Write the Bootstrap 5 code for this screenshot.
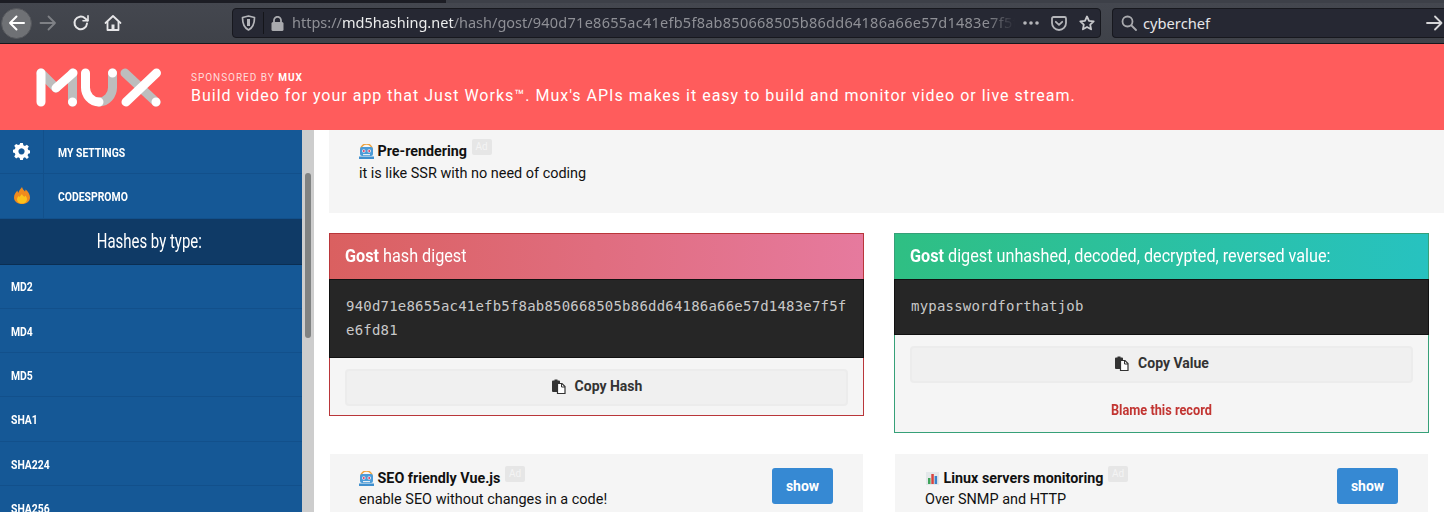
<!DOCTYPE html>
<html lang="en">
<head>
  <meta charset="UTF-8">
  <meta name="viewport" content="width=device-width, initial-scale=1">
  <title>Gost hash digest</title>
  <link href="https://cdn.jsdelivr.net/npm/bootstrap@5.3.0/dist/css/bootstrap.min.css" rel="stylesheet">
  <style>
    html, body { height: 100%; overflow: hidden; }
    body { font-family: Roboto, sans-serif; font-size: 14.45px; color: #111; background: #fff; }
    .squeeze { display: inline-block; transform: scaleX(.9); transform-origin: left center; white-space: nowrap; }

    .tabstrip { height: 3px; background: #3d4048; }
    .tabstrip div { width: 446px; height: 3px; background: #1c1d24; }
    .toolbar { height: 41px; background: linear-gradient(#44474f, #3f4249); border-bottom: 1px solid #16171c; }
    .nav-ico { flex: none; display: flex; align-items: center; justify-content: center; }
    .back-btn { width: 31px; height: 31px; margin-left: 1px; border-radius: 50%; background: #6f7175; border: 1px solid #55575c; }
    .urlbar { width: 869px; height: 30px; background: #262833; border: 1px solid #17181e; border-radius: 4px; color: #8f9096; font-family: "Noto Sans", sans-serif; font-size: 14.5px; }
    .searchbar { flex: 1; height: 30px; margin-left: 11px; background: #262833; border: 1px solid #17181e; border-right: 0; border-radius: 4px 0 0 4px; color: #e6e6e8; font-family: "Noto Sans", sans-serif; font-size: 14.7px; }
    .urltext { width: 723px; margin-left: 8px; overflow: hidden; white-space: nowrap; -webkit-mask-image: linear-gradient(to right, #000 96%, transparent); mask-image: linear-gradient(to right, #000 96%, transparent); }
    .urltext b { font-weight: 400; color: #eceded; }
    .urltext i { font-style: normal; letter-spacing: .26px; }
    .urlsep { width: 1px; height: 22px; background: #14151a; margin: 0 7px 0 7px; }

    .promo { height: 86px; background: #ff5c5c; color: #fff; padding-left: 35px; }
    .promo-by { font-size: 10px; letter-spacing: .98px; line-height: 12px; color: #ffdcdc; padding-top: 4px; }
    .promo-by b { color: #fff; }
    .promo-line { font-size: 16px; letter-spacing: 1px; line-height: 21px; margin-top: 1px; padding-bottom: 1px; }

    .sidebar { width: 302px; flex: none; background: #155896; color: #fff; font-weight: 700; font-size: 13px; }
    .side-item { height: 44.3px; border-bottom: 1px solid #12508b; }
    .side-item .squeeze { transform: scaleX(.8); padding-top: 2px; }
    .side-ico { width: 44px; align-self: stretch; border-right: 1px solid #12508b; }
    .side-label { padding-left: 14px; }
    .side-plain { padding-left: 11px; }
    .side-head { height: 46px; background: #0f3a66; border-bottom: 1px solid #0b2e52; font-size: 20px; font-weight: 400; padding-right: 4px; }
    .side-head .squeeze { transform-origin: center; transform: scaleX(.747); }
    .scrolltrack { width: 12px; flex: none; background: #cdcdcd; padding: 43px 3px 0; }
    .scrollthumb { height: 165px; background: #808282; border-radius: 3px; }

    .content { flex: 1; min-width: 0; }
    .notice { margin-left: 15px; height: 83px; background: #f5f5f5; padding: 11px 30px; }
    .ad-title { font-weight: 700; font-size: 14.3px; line-height: 20px; height: 20px; margin-top: -2px; }
    .ad-line { line-height: 20px; margin-top: 5px; }
    .ad-tag { display: inline-block; background: #e6e6e6; color: #f4f4f4; font-size: 10px; font-weight: 400; line-height: 16px; padding: 0 4px; border-radius: 2px; vertical-align: 6px; margin-left: 1px; }
    .ad-emoji { vertical-align: -3px; }

    .hash-row { --bs-gutter-x: 30px; margin: 20px 0 0; }
    .digest { border-radius: 0; background: #f5f5f5; }
    .digest-red { border: 1px solid #b9363a; height: 183px; }
    .digest-green { border: 1px solid #36a078; height: 200px; }
    .digest-head { height: 45px; color: #fff; font-size: 19px; padding: 0 0 1px 15px; border-radius: 0; }
    .digest-head .squeeze { transform: scaleX(.853); }
    .digest-head b { font-weight: 700; }
    .digest-red .digest-head { background: linear-gradient(to right, #da6060, #e67a9e); }
    .digest-green .digest-head { background: linear-gradient(to right, #2fbf83, #27c2c0); }
    .digest-code { background: #262626; border: 1px solid #111; color: #c9c9c9; font-family: "DejaVu Sans Mono", monospace; font-size: 14px; letter-spacing: .2px; line-height: 24px; padding: 14px 15px 15px 16px; word-break: break-all; margin: 0 -1px; }
    .digest-red .digest-code { height: 79px; }
    .digest-green .digest-code { height: 56px; }
    .copy-btn { display: flex; align-items: center; justify-content: center; gap: 9px; height: 37px; margin: 11px 15px 0; width: auto; background: #f0f0f0; border: 2px solid #ececec; border-radius: 4px; font-size: 14px; font-weight: 700; color: #333; padding: 0 0 3px; }
    .blame { color: #c23532; font-weight: 700; font-size: 14px; margin-top: 17px; }
    .blame .squeeze { transform-origin: center; transform: scaleX(.91); }

    .ad-box { margin: 21px 1px 0; height: 80px; background: #f5f5f5; padding: 14px 30px 0 30px; }
    .ad-box-left { margin-top: 38px; padding-left: 29px; }
    .ad-box .ad-line { margin-top: 4px; }
    .show-btn { width: 61px; height: 36px; padding: 0; background: #3689d3; border: 0; border-radius: 3px; color: #fff; font-size: 14px; font-weight: 700; }
  </style>
</head>
<body>
  <div class="tabstrip"><div></div></div>
  <div class="toolbar d-flex align-items-center">
    <div class="nav-ico back-btn">
      <svg width="18" height="16" viewBox="0 0 18 16" fill="none" stroke="#fff" stroke-width="2" stroke-linecap="round" stroke-linejoin="round"><path d="M16 8H2M8.500 1.500 2 8l6.500 6.500"/></svg>
    </div>
    <div class="nav-ico" style="margin-left:7px">
      <svg width="18" height="16" viewBox="0 0 18 16" fill="none" stroke="#7f8186" stroke-width="1.800" stroke-linecap="round" stroke-linejoin="round"><path d="M1.500 8H16M9.500 1.500 16 8l-6.500 6.500"/></svg>
    </div>
    <div class="nav-ico" style="margin-left:15px">
      <svg width="18" height="18" viewBox="0 0 18 18" fill="none" stroke="#e6e6e8" stroke-width="2" stroke-linecap="round" stroke-linejoin="round"><path d="M15 9.500A6.300 6.300 0 1 1 13 4.300L15.500 6.500"/><path d="M16 1.800v5h-5" stroke-width="1.600"/></svg>
    </div>
    <div class="nav-ico" style="margin-left:14px">
      <svg width="18" height="18" viewBox="0 0 18 18" fill="none" stroke="#e6e6e8" stroke-width="1.800" stroke-linejoin="round" stroke-linecap="round"><path d="M1.500 9 9 2l7.500 7"/><path d="M3.500 8v8h11V8"/><rect x="7.500" y="10.500" width="3" height="5" fill="#e6e6e8" stroke="none"/></svg>
    </div>
    <div class="urlbar d-flex align-items-center" style="margin-left:110px">
      <div class="nav-ico ms-2">
        <svg width="15" height="16" viewBox="0 0 15 16" fill="none" stroke="#b5b6ba" stroke-width="1.700" stroke-linejoin="round"><path d="M1.500 2.500 7.500 1l6 1.500c0 6-1 10-6 12.500-5-2.500-6-6.500-6-12.500Z"/><path d="M7.500 4v7" stroke-width="3"/></svg>
      </div>
      <div class="urlsep"></div>
      <div class="nav-ico">
        <svg width="13" height="15" viewBox="0 0 13 15"><path d="M3 6.500V4.300a3.500 3.500 0 0 1 7 0v2.200" fill="none" stroke="#a9aaae" stroke-width="1.800"/><rect x="0.500" y="6" width="12" height="9" rx="1.500" fill="#a9aaae"/></svg>
      </div>
      <div class="urltext">https://<b>md5hashing.net</b>/hash/gost/<i>940d71e8655ac41efb5f8ab850668505b86dd64186a66e57d1483e7f5fe6fd81</i></div>
      <div class="nav-ico" style="margin-left:8px">
        <svg width="16" height="4" viewBox="0 0 16 4" fill="#b5b6ba"><circle cx="2" cy="2" r="1.800"/><circle cx="8" cy="2" r="1.800"/><circle cx="14" cy="2" r="1.800"/></svg>
      </div>
      <div class="nav-ico" style="margin-left:12px">
        <svg width="16" height="15" viewBox="0 0 16 15" fill="none" stroke="#b5b6ba" stroke-width="1.800" stroke-linejoin="round" stroke-linecap="round"><path d="M2.500 1h11A1.500 1.500 0 0 1 15 2.500V7A7 7 0 0 1 1 7V2.500A1.500 1.500 0 0 1 2.500 1Z"/><path d="m4.800 5.800 3.200 3 3.200-3"/></svg>
      </div>
      <div class="nav-ico" style="margin-left:12px">
        <svg width="16" height="16" viewBox="0 0 16 16" fill="none" stroke="#c8c9cc" stroke-width="1.800" stroke-linejoin="round"><path d="m8 1.500 2 4.300 4.700.6-3.500 3.200.9 4.700L8 12l-4.100 2.300.9-4.700L1.300 6.400 6 5.800Z"/></svg>
      </div>
    </div>
    <div class="searchbar d-flex align-items-center">
      <div class="nav-ico" style="margin-left:8px">
        <svg width="16" height="16" viewBox="0 0 16 16" fill="none" stroke="#a9aaae" stroke-width="1.800" stroke-linecap="round"><circle cx="6.500" cy="6.500" r="5"/><path d="m10.500 10.500 4.500 4.500"/></svg>
      </div>
      <span style="margin-left:6px">cyberchef</span>
      <div class="nav-ico ms-auto" style="margin-right:1px">
        <svg width="17" height="16" viewBox="0 0 17 16" fill="none" stroke="#d6d6d8" stroke-width="1.800" stroke-linecap="round" stroke-linejoin="round"><path d="M1 8h14.500M9 1.500 15.500 8 9 14.500"/></svg>
      </div>
    </div>
  </div>

  <div class="promo d-flex align-items-center">
    <svg width="127" height="41" viewBox="35 67 127 41" fill="none" stroke-width="9" stroke-linecap="round" stroke-linejoin="round">
      <path d="M41 73 56 88M72.500 73v29M125 73l31 29M112.500 73v14a13.500 14.500 0 0 1-13.500 15" stroke="#bdbdbd"/>
      <path d="M41 73v29M56 88 73 73M85.500 73v14a13.500 14.500 0 0 0 13.500 15M156.500 73 126 102" stroke="#fff"/>
      <path d="M72.500 102v.01M112.500 73v.01M156 102v.01" stroke="#fff"/>
    </svg>
    <div style="margin-left:29px">
      <div class="promo-by">SPONSORED BY <b>MUX</b></div>
      <div class="promo-line">Build video for your app that Just Works™. Mux's APIs makes it easy to build and monitor video or live stream.</div>
    </div>
  </div>

  <div class="d-flex">
    <div class="sidebar">
      <div class="side-item d-flex align-items-center">
        <div class="side-ico d-flex align-items-center justify-content-center">
          <svg width="17" height="17" viewBox="0 0 24 24"><path fill="#fff" fill-rule="evenodd" d="M10 0h4l.7 3.300 2.300 1 2.900-1.800 2.800 2.800L21 8l1 2.300 3 .7v4l-3.100.7-1 2.300 1.800 2.900-2.800 2.800L17 21l-2.300 1-.7 3h-4l-.7-3.100-2.300-1-2.900 1.800-2.800-2.800L3 17l-1-2.300L-1 14v-4l3.100-.7 1-2.300L1.300 4.100l2.800-2.800L7 3.100l2.300-1ZM12 7.800a4.500 4.500 0 1 0 .01 0Z" transform="translate(.5 0) scale(.96)"/></svg>
        </div>
        <div class="side-label"><span class="squeeze">MY SETTINGS</span></div>
      </div>
      <div class="side-item d-flex align-items-center">
        <div class="side-ico d-flex align-items-center justify-content-center">
          <svg width="16" height="17" viewBox="0 0 16 17"><path fill="#f08a1d" d="M8 0c.6 2.500 2 3 3 4.600.4-.6.500-1.200.5-2C14 4.500 16 7.500 16 10.500 16 14.500 12.500 17 8 17s-8-2.500-8-6.500C0 7.500 2 5 3.500 3.500c0 1 .2 1.700.8 2.300C5 3.500 6.500 2 8 0Z"/><path fill="#fcc21b" d="M8 7c.5 1.500 1.500 2 2.500 2.800.5-.3.600-.7.700-1.200 1.200 1 1.800 2.300 1.800 3.600C13 15 10.800 16.500 8 16.500S3 15 3 12.200c0-1.500 1-2.800 2-3.500.1.500.2.900.6 1.200C6.200 9 7 8 8 7Z"/></svg>
        </div>
        <div class="side-label"><span class="squeeze">CODESPROMO</span></div>
      </div>
      <div class="side-head d-flex align-items-center justify-content-center"><span class="squeeze">Hashes by type:</span></div>
      <div class="side-item side-plain d-flex align-items-center"><span class="squeeze">MD2</span></div>
      <div class="side-item side-plain d-flex align-items-center"><span class="squeeze">MD4</span></div>
      <div class="side-item side-plain d-flex align-items-center"><span class="squeeze">MD5</span></div>
      <div class="side-item side-plain d-flex align-items-center"><span class="squeeze">SHA1</span></div>
      <div class="side-item side-plain d-flex align-items-center"><span class="squeeze">SHA224</span></div>
      <div class="side-item side-plain d-flex align-items-center"><span class="squeeze">SHA256</span></div>
    </div>
    <div class="scrolltrack"><div class="scrollthumb"></div></div>

    <div class="content">
      <div class="notice">
        <div class="ad-title">
          <svg class="ad-emoji" width="15" height="15" viewBox="0 0 15 15"><path d="M2 5a5.500 5 0 0 1 11 0" fill="none" stroke="#f0a23c" stroke-width="1.500"/><rect x="1" y="3" width="13" height="9" rx="2" fill="#4a9bd8"/><circle cx="4.800" cy="7" r="1.800" fill="#f4e3e8"/><circle cx="10.200" cy="7" r="1.800" fill="#f4e3e8"/><circle cx="4.800" cy="7" r=".9" fill="#d8345f"/><circle cx="10.200" cy="7" r=".9" fill="#d8345f"/><rect x="4" y="10" width="7" height="1.200" fill="#e6eef5"/><rect x="0" y="12.500" width="15" height="2.500" fill="#3f8fce"/></svg>
          Pre-rendering <span class="ad-tag">Ad</span>
        </div>
        <div class="ad-line">it is like SSR with no need of coding</div>
      </div>

      <div class="row hash-row">
        <div class="col-6">
          <div class="card digest digest-red">
            <div class="digest-head d-flex align-items-center"><span class="squeeze"><b>Gost</b> hash digest</span></div>
            <div class="digest-code">940d71e8655ac41efb5f8ab850668505b86dd64186a66e57d1483e7f5fe6fd81</div>
            <button class="btn copy-btn" type="button">
              <svg width="15" height="15" viewBox="0 0 15 15"><path fill="#333" d="M1 2.500A1 1 0 0 1 2 1.500h1.500V.500h3v1H8a1 1 0 0 1 1 1V4H6v9H2a1 1 0 0 1-1-1Z"/><path d="M6.500 4.500h4.500l3 3v7h-7.500Z" fill="#fff" stroke="#333" stroke-width="1.200"/><path d="M10.500 4.500v3.500H14" fill="none" stroke="#333"/></svg>
              <span>Copy Hash</span>
            </button>
          </div>
          <div class="ad-box ad-box-left d-flex justify-content-between">
            <div>
              <div class="ad-title">
                <svg class="ad-emoji" width="15" height="15" viewBox="0 0 15 15"><path d="M2 5a5.500 5 0 0 1 11 0" fill="none" stroke="#f0a23c" stroke-width="1.500"/><rect x="1" y="3" width="13" height="9" rx="2" fill="#4a9bd8"/><circle cx="4.800" cy="7" r="1.800" fill="#f4e3e8"/><circle cx="10.200" cy="7" r="1.800" fill="#f4e3e8"/><circle cx="4.800" cy="7" r=".9" fill="#d8345f"/><circle cx="10.200" cy="7" r=".9" fill="#d8345f"/><rect x="4" y="10" width="7" height="1.200" fill="#e6eef5"/><rect x="0" y="12.500" width="15" height="2.500" fill="#3f8fce"/></svg>
                SEO friendly Vue.js <span class="ad-tag">Ad</span>
              </div>
              <div class="ad-line">enable SEO without changes in a code!</div>
            </div>
            <button class="btn show-btn" type="button">show</button>
          </div>
        </div>

        <div class="col-6">
          <div class="card digest digest-green">
            <div class="digest-head d-flex align-items-center"><span class="squeeze"><b>Gost</b> digest unhashed, decoded, decrypted, reversed value:</span></div>
            <div class="digest-code">mypasswordforthatjob</div>
            <button class="btn copy-btn" type="button">
              <svg width="15" height="15" viewBox="0 0 15 15"><path fill="#333" d="M1 2.500A1 1 0 0 1 2 1.500h1.500V.500h3v1H8a1 1 0 0 1 1 1V4H6v9H2a1 1 0 0 1-1-1Z"/><path d="M6.500 4.500h4.500l3 3v7h-7.500Z" fill="#fff" stroke="#333" stroke-width="1.200"/><path d="M10.500 4.500v3.500H14" fill="none" stroke="#333"/></svg>
              <span>Copy Value</span>
            </button>
            <div class="blame text-center"><span class="squeeze">Blame this record</span></div>
          </div>
          <div class="ad-box d-flex justify-content-between">
            <div>
              <div class="ad-title">
                <svg class="ad-emoji" width="15" height="15" viewBox="0 0 15 15"><rect x="1" y="1" width="13" height="13" fill="#e4e8ea"/><rect x="3" y="7" width="2.500" height="6" fill="#3fa45b"/><rect x="6.300" y="3" width="2.500" height="10" fill="#d9433f"/><rect x="9.600" y="5" width="2.500" height="8" fill="#3b83c9"/></svg>
                Linux servers monitoring <span class="ad-tag">Ad</span>
              </div>
              <div class="ad-line">Over SNMP and HTTP</div>
            </div>
            <button class="btn show-btn" type="button">show</button>
          </div>
        </div>
      </div>
    </div>
  </div>
  <script src="https://cdn.jsdelivr.net/npm/bootstrap@5.3.0/dist/js/bootstrap.bundle.min.js"></script>
</body>
</html>
